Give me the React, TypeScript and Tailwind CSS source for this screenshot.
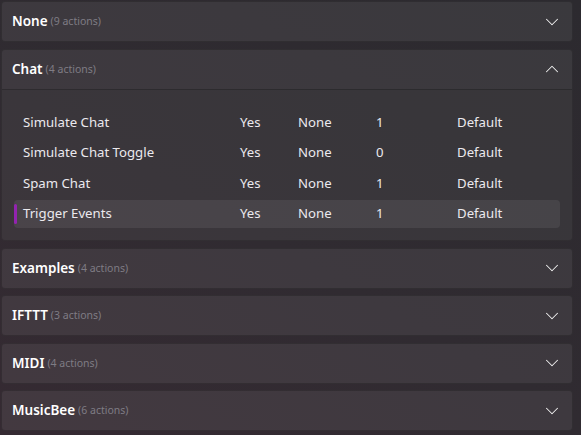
import React from 'react';
import { ChevronDown, ChevronUp } from 'lucide-react';

type Action = { name: string; enabled: string; trigger: string; count: string; queue: string };

const groups: { title: string; count: number; open?: boolean }[] = [
  { title: 'None', count: 9 },
  { title: 'Chat', count: 4, open: true },
  { title: 'Examples', count: 4 },
  { title: 'IFTTT', count: 3 },
  { title: 'MIDI', count: 4 },
  { title: 'MusicBee', count: 6 },
];

const chatActions: Action[] = [
  { name: 'Simulate Chat', enabled: 'Yes', trigger: 'None', count: '1', queue: 'Default' },
  { name: 'Simulate Chat Toggle', enabled: 'Yes', trigger: 'None', count: '0', queue: 'Default' },
  { name: 'Spam Chat', enabled: 'Yes', trigger: 'None', count: '1', queue: 'Default' },
  { name: 'Trigger Events', enabled: 'Yes', trigger: 'None', count: '1', queue: 'Default' },
];

function Header({ title, count, open }: { title: string; count: number; open?: boolean }) {
  return (
    <div className="h-[39px] flex items-center pl-[10px] pr-[9px]">
      <span className="text-[13.5px] font-semibold text-white">{title}</span>
      <span className="ml-[3px] text-[10.5px] text-[#7f7c84] pt-[1px]">({count} actions)</span>
      <div className="ml-auto text-[#f2f2f2]">
        {open ? <ChevronUp size={22} strokeWidth={1.1} /> : <ChevronDown size={22} strokeWidth={1.1} />}
      </div>
    </div>
  );
}

export default function App() {
  return (
    <div
      className="w-[581px] h-[435px] overflow-hidden bg-[linear-gradient(30deg,#352a32_0%,#302b31_45%,#2c2a2f_100%)] pt-[1px] pl-[1px] pr-[8px]"
      style={{ fontFamily: '"Noto Sans", "Open Sans", sans-serif' }}
    >
      <div className="flex flex-col gap-[6.5px]">
        {groups.map((g) => (
          <div
            key={g.title}
            className="rounded-[4px] border border-black/20 bg-white/[0.07] overflow-hidden"
          >
            <Header title={g.title} count={g.count} open={g.open} />
            {g.open && (
              <div className="border-t border-black/20 bg-black/[0.05] px-[12px] pt-[19px] pb-[12px] flex flex-col gap-[2.5px]">
                {chatActions.map((a, i) => {
                  const selected = i === chatActions.length - 1;
                  return (
                    <div
                      key={a.name}
                      className={
                        'relative h-[28px] flex items-center text-[13.2px] text-[#ebe9ee] rounded-[4px] ' +
                        (selected ? 'bg-white/[0.07]' : '')
                      }
                    >
                      {selected && (
                        <div className="absolute left-0 top-[4px] bottom-[4px] w-[3px] rounded-full bg-[#9323b0]" />
                      )}
                      <span className="w-[226px] pl-[9px]">{a.name}</span>
                      <span className="w-[58px]">{a.enabled}</span>
                      <span className="w-[78px]">{a.trigger}</span>
                      <span className="w-[81px]">{a.count}</span>
                      <span>{a.queue}</span>
                    </div>
                  );
                })}
              </div>
            )}
          </div>
        ))}
      </div>
    </div>
  );
}
